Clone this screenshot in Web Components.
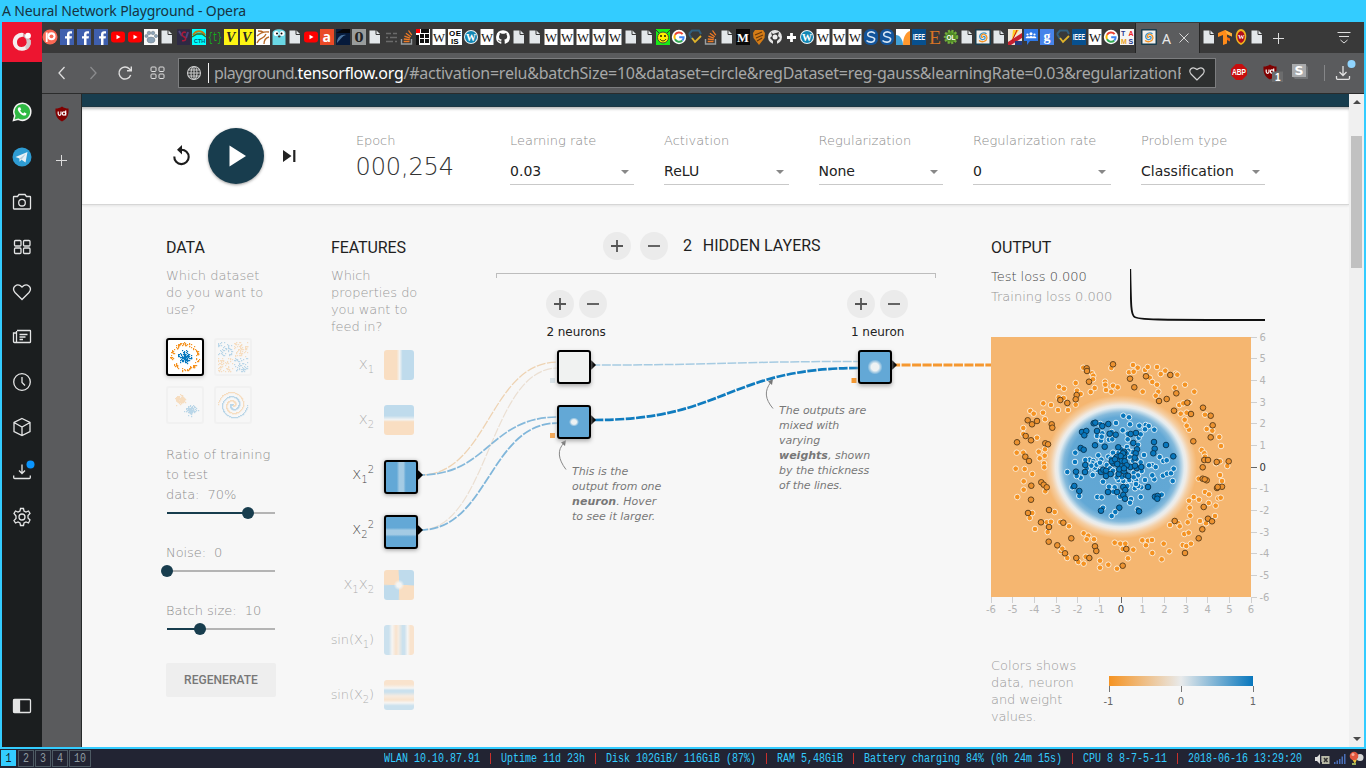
<!DOCTYPE html>
<html lang="en">
<head>
<meta charset="utf-8">
<title>A Neural Network Playground - Opera</title>
<style>
html,body{margin:0;height:100%;overflow:hidden;background:#33ccff}
</style>
</head>
<body>
<desktop-screen></desktop-screen>
<script>
const define = (name, html, setup) => customElements.define(name, class extends HTMLElement {
  connectedCallback() {
    if (this.shadowRoot) return;
    const root = this.attachShadow({ mode: 'open' });
    root.innerHTML = typeof html === 'function' ? html(this) : html;
    if (setup) setup(this, root);
  }
});

/* Single line of text tracked so that it spans the width in the "w" attribute. */
define('fit-text', '<style>:host{display:block;white-space:pre;width:max-content}</style><span><slot></slot></span>', (el, root) => {
  queueMicrotask(() => {
    let w = +el.getAttribute('w');
    if (!w) return;
    if (w < 130) w -= .7;
    const span = root.querySelector('span');
    const n = el.textContent.length;
    el.style.letterSpacing = ((w - span.getBoundingClientRect().width) / n).toFixed(3) + 'px';
  });
});

const rng = seed => () => { seed = (seed * 1664525 + 1013904223) % 4294967296; return seed / 4294967296; };
const gaussian = r => Math.sqrt(-2 * Math.log(r() + 1e-9)) * Math.cos(6.2832 * r());

/* ---------- tab icons, 16 x 16 ---------- */
const spiral = '<rect width="16" height="16" rx="1" fill="#183d4e"/><rect x="1.500" y="1.500" width="13" height="13" fill="#f0f0ee"/><path d="M8 8c1-1.500 2.500 0 2 1.300C9 11.500 5 11 4.700 8 4.500 4.500 9 2.500 11.500 5" fill="none" stroke="#3b93c9" stroke-width="1.300"/><path d="M8 8C7 9 5.800 7.500 6.600 6.300 8 4 12 5.500 12 9c-.5 3.500-5 5-8 2.500" fill="none" stroke="#f59322" stroke-width="1.300"/>';
const fav = {
  doc: '<path d="M2.500 1.500h7L13 5v9.500H2.500z" fill="#e3e7ea"/><path d="M9 1v4.500h4.500" fill="none" stroke="#393939" stroke-width="1"/>',
  patreon: '<circle cx="8" cy="8" r="7.500" fill="#f96854"/><circle cx="9.500" cy="7.300" r="4" fill="#fff"/><circle cx="9.500" cy="7.300" r="1.900" fill="#f96854"/><path d="M3.800 3.500h1.800v9.500H3.800z" fill="#fff"/>',
  fb: '<rect x="1" y="0" width="14" height="16" fill="#3f5fae"/><path d="M13 4.500h-1.500c-.7 0-1 .3-1 1.100V7.200h2.500l-.4 2.400h-2.100V16H8V9.600H6V7.200h2V5.200C8 3.300 9.400 2.300 11 2.300h2z" fill="#fff"/>',
  yt: '<rect x="1" y="2.500" width="14" height="11" rx="3" fill="#f00"/><path d="M6.500 5.700v4.600l4-2.300z" fill="#fff"/>',
  paw: '<rect x="1" y="0" width="14" height="16" fill="#fafafa"/><g fill="#8ba3b8" stroke="#68747e" stroke-width=".5"><ellipse cx="8" cy="11" rx="4" ry="3"/><circle cx="3.500" cy="7" r="1.600"/><circle cx="6" cy="4" r="1.800"/><circle cx="10" cy="4" r="1.800"/><circle cx="13" cy="7" r="1.600"/></g>',
  purple: '<rect x="2" y="0" width="13" height="16" fill="#2e2944"/><path d="M4 2l3 5M13 3l-2 6" stroke="#51457c" stroke-width="2"/><path d="M11 3.500C7 2 6 6 8.500 7.500 12 9 11 12.500 7 11.500" fill="none" stroke="#a8193a" stroke-width="1.500"/>',
  cth: '<rect x="1" y="0" width="14" height="16" fill="#0ff"/><path d="M2 6c3-5 9-5 12 0" fill="none" stroke="#c57911" stroke-width="2"/><path d="M1 8l5-3h5l4 3" fill="none" stroke="#3b6b24" stroke-width="1.300"/><text x="3" y="13.800" font-size="5.500" font-family="Liberation Sans" font-weight="700" fill="#065b7a">CTH</text>',
  t: '<text x="1" y="12" font-size="12" font-family="Liberation Mono" textLength="14" lengthAdjust="spacingAndGlyphs" fill="#14b01b">{t}</text>',
  v: '<rect x="1" y="0" width="14" height="16" fill="#fdf514"/><text x="3" y="13" font-size="14" font-style="italic" font-weight="700" font-family="Liberation Serif" fill="#252525">V</text>',
  book: '<rect x="1" y="0" width="14" height="16" fill="#fff"/><path d="M3 2c3 0 4 0 5 1M2 7c3-3 6-5 12-4M2 14c4-8 6-2 9-9M9 15c0-4 1-6 5-7" stroke="#b96926" fill="none" stroke-width="1.300"/>',
  gopher: '<path d="M1.500 4c0-5 13-5 13 0v12h-13z" fill="#6ad7e5"/><circle cx="5.200" cy="4.500" r="2.500" fill="#fff"/><circle cx="11" cy="4.500" r="2.500" fill="#fff"/><circle cx="6" cy="4.500" r="1"/><circle cx="10.500" cy="4.500" r="1"/><ellipse cx="8.300" cy="7.500" rx="1.300" ry="1" fill="#433"/>',
  a: '<rect x="1" y="0" width="14" height="16" fill="#ea4a27"/><text x="3.500" y="12.500" font-size="14" font-weight="700" font-family="Open Sans" fill="#fff">a</text>',
  navy: '<rect x="1" y="0" width="14" height="16" fill="#061a3b"/><path d="M1 4h14V0H8z" fill="#06070b"/><path d="M2 14c0-6 4-9 9-8-4 1-5 4-9 8z" fill="#4b739d"/>',
  o: '<rect x="1" y="0" width="14" height="16" fill="#999c9c"/><text x="3.500" y="12.800" font-size="13" font-weight="700" font-family="DejaVu Serif" textLength="9" lengthAdjust="spacingAndGlyphs" fill="#222">0</text>',
  lines: '<path d="M3 4.500h5M10 4.500h4M3 8.500h2M7 8.500h7M3 12.500h7M12 12.500h2" stroke="#6b6b6b" stroke-width="1.500"/>',
  so: '<path d="M2.500 10v5h10V10" fill="none" stroke="#9ba0a3" stroke-width="1.400"/><path d="M4.700 12.500h5.800M4.800 10l6 .7M5.400 7.200l5.600 1.900M6.900 4.200l4.800 3.500M9.500 1.500l3.300 4.700" stroke="#ef7a25" stroke-width="1.300"/>',
  grid: '<rect x="1" y="0" width="14" height="16" fill="#fff"/><path d="M1 0h4v4H1z" fill="#f00"/><path d="M5 5h4v4H5zM10 5h4v4h-4zM5 10h4v4H5zM10 10h4v4h-4zM6 0h8v4H6zM1 6h3v10H1z" fill="#111"/>',
  w: '<rect x="1.500" y="0" width="13" height="16" fill="#fff"/><text x="2" y="12.500" font-size="12" font-family="Liberation Serif" textLength="12" lengthAdjust="spacingAndGlyphs" fill="#111">W</text>',
  oeis: '<rect x="1" y="0" width="14" height="16" fill="#fff"/><text x="2" y="7" font-size="8" font-weight="700" font-family="Liberation Sans" textLength="12">OE</text><text x="4" y="15" font-size="8" font-weight="700" font-family="Liberation Sans">IS</text>',
  wp: '<circle cx="8" cy="8" r="7" fill="#eaf4f9"/><circle cx="8" cy="8" r="6" fill="#1387b4"/><text x="3" y="12" font-size="11" font-weight="700" font-family="Liberation Serif" textLength="10" lengthAdjust="spacingAndGlyphs" fill="#fff">W</text>',
  gh: '<path d="M8 1.200a7 7 0 0 0-2.200 13.600c.4 0 .5-.2.500-.4V12.500c-2.500.3-3-1-3.300-1.800.8-.2 1.500 1 2 1.100.6.200 1.200 0 1.400-.2.100-.5.300-.7.500-.9C5 10.500 4 9.600 4 7.600c0-.8.300-1.300.7-1.800 0-.5-.1-1 .1-1.800.8 0 1.500.5 2 .8a7 7 0 0 1 2.600 0c.6-.4 1.200-.8 2-.8.200.8.200 1.300.1 1.800.5.500.7 1 .7 1.800 0 2-1.200 2.900-3 3.100.4.400.5.800.5 1.500v2.200c0 .2.100.4.500.4A7 7 0 0 0 8 1.200z" fill="#fff"/>',
  smiley: '<rect x="1" y="0" width="14" height="16" fill="#18ec17"/><circle cx="8" cy="8.500" r="5.500" fill="#fff000" stroke="#444"/><circle cx="6" cy="7" r=".9"/><circle cx="10" cy="7" r=".9"/><path d="M5 10c1.500 2.500 4.500 2.500 6 0" fill="none" stroke="#222"/><path d="M1 1l3 3M15 1l-3 3" stroke="#333"/>',
  g: '<circle cx="8" cy="8" r="7.200" fill="#fff"/><path d="M11.600 5.200A4.700 4.700 0 0 0 4 5.800" stroke="#ea4335" fill="none" stroke-width="2"/><path d="M4 5.800A4.700 4.700 0 0 0 4 10.300" stroke="#fbbc05" fill="none" stroke-width="2"/><path d="M4 10.300A4.700 4.700 0 0 0 11.300 11.500" stroke="#34a853" fill="none" stroke-width="2"/><path d="M11.300 11.500c1-1 1.400-2 1.300-3.200H8.200" stroke="#4285f4" fill="none" stroke-width="2"/>',
  hex: '<path d="M2 5l3-3.500h7L14 5M2 5l3 5" fill="none" stroke="#315f7e" stroke-width="2"/><path d="M5 9l3 4 6-6" fill="none" stroke="#e0b42b" stroke-width="1.800"/>',
  m: '<rect x="1" y="0" width="14" height="16" fill="#090909"/><text x="2" y="12.500" font-size="12.500" font-weight="700" font-family="Liberation Serif" fill="#fff">M</text>',
  shield: '<path d="M4 1h8l2 3-.5 5L8 16 2.500 9 2 4z" fill="#d57c16"/><path d="M4 6l7-3M5 9l7-3M6 12l5-3" stroke="#6c390a" stroke-width="1.200"/>',
  cat: '<circle cx="8" cy="8" r="7" fill="#e5e5e5"/><path d="M4 3l2 2 3-1 3-1-1 4 2 2-3 3v3H6v-3L3 9l2-2z" fill="#393939"/><circle cx="8" cy="8" r="2.500" fill="#eee"/>',
  plus: '<path d="M8.500 4v9M4 8.500h9" stroke="#fff" stroke-width="2.800"/>',
  s: '<rect x="1" y="0" width="14" height="16" rx="6" fill="#12549b"/><path d="M12 4.500C8 1 3.500 4 5 6.500c1.500 2 5 1 6.500 3C12.500 13 7 14.500 3.500 11.500" fill="none" stroke="#d5e5f5" stroke-width="1.600"/>',
  arc: '<rect x="1" y="0" width="14" height="16" fill="#fff"/><path d="M8 16c0-8 3-13 7-14v14z" fill="#ff982e"/><path d="M1 6c4 0 7 5 7 10H1z" fill="#42a0d5"/>',
  ieee: '<rect x="1" y="0" width="14" height="16" fill="#07508f"/><text x="2" y="11" font-size="8.500" font-weight="700" font-family="Liberation Sans" textLength="12" lengthAdjust="spacingAndGlyphs" fill="#fff">IEEE</text>',
  e: '<text x="2" y="14.500" font-size="19" font-family="Liberation Serif" textLength="12" lengthAdjust="spacingAndGlyphs" fill="#d77325">E</text>',
  ol: '<circle cx="8" cy="8" r="6" fill="#4f8a25" stroke="#72ad3c" stroke-width="2.500" stroke-dasharray="2 1.500"/><text x="3.500" y="10.500" font-size="6.500" font-weight="700" font-family="Liberation Sans" fill="#fff">OL</text>',
  spiral,
  flag: '<rect x="1" y="0" width="14" height="16" fill="#ece6da"/><path d="M1 13l14-9v5L4 16H1z" fill="#c42030"/><path d="M6 1h6L5 11z" fill="#ffcf27"/><path d="M10 1L5 12" stroke="#c11"/><path d="M8 12h7v4H8z" fill="#253a7d"/>',
  group: '<path d="M1 0h14v12H7l-3 4v-4H1z" fill="#2d77e5"/><g fill="#fff"><circle cx="8" cy="4.700" r="1.500"/><circle cx="4.500" cy="5.500" r="1.100"/><circle cx="11.500" cy="5.500" r="1.100"/><path d="M2.800 9.200V8.200c1-1 3-1 3.300-.5 1-.8 2.800-.8 3.800 0 .8-.5 2.300-.5 3.300.5v1z"/></g>',
  gb: '<rect x="1" y="0" width="14" height="16" fill="#4683ea"/><text x="4.500" y="11.500" font-size="14" font-weight="700" font-family="Liberation Serif" fill="#fff">g</text>',
  tams: '<rect x="1" y="0" width="14" height="16" fill="#f5f5f5"/><g font-family="Liberation Sans" font-weight="700" font-size="7"><text x="2" y="6.500" fill="#27348b">T</text><text x="9.500" y="6.500" fill="#e22">A</text><text x="2" y="14.500" fill="#eaa21c">M</text><text x="9.500" y="14.500" fill="#27348b">S</text></g>',
  tf: '<path d="M1 4l7-3 7 3.500v3L10 5.500v9L6 16V6L1 8z" fill="#ff8c1a"/><path d="M10 8l3 1.500v3L10 11z" fill="#f06a10"/><path d="M8 1l7 3.500v3L10 5z" fill="#ffb03b"/>',
  crest: '<path d="M8 0c7 1 7 13 0 16C1 13 1 1 8 0z" fill="#efb41d"/><path d="M8 2c5 1 5 10 0 12-5-2-5-11 0-12z" fill="#b20e1a"/><text x="5" y="10" font-size="6.500" font-weight="700" font-family="Liberation Serif" fill="#fff">W</text>'
};
define('fav-icon', el => `<style>:host{display:block;flex:none;width:16px;height:16px}svg{display:block}</style><svg width="16" height="16" viewBox="0 0 16 16">${fav[el.getAttribute('kind')]}</svg>`);

define('tab-strip', () => {
  const before = 'patreon fb fb fb yt yt paw doc purple cth t v v book gopher doc yt a navy o doc lines so grid w oeis wp w gh doc doc w w w w w doc doc smiley g hex so doc m shield cat plus wp w w w s s arc ieee e ol doc spiral doc flag group gb hex ieee w g tams'.split(' ');
  return `<style>
  :host{display:flex;height:31px;background:#393939;align-items:center}
  .a{display:flex;width:1093px;justify-content:flex-start;margin-top:-1px}
  fav-icon.g{margin-right:1px}
  .active{box-sizing:border-box;width:65px;height:30px;margin-top:1px;background:#5b5c5e;border:solid #262626;border-width:0 1px;display:flex;align-items:center;padding-left:5px;font:14px "Noto Sans",sans-serif;color:#e8e8e8}
  .active fav-icon{margin-top:-2px}
  .active span{margin-left:5px;width:12px}.active svg{margin-left:4px}
  .b{display:flex;padding-left:1px;margin-top:-1px}.plus{margin-left:5px}.menu{margin-left:auto;margin-right:12px}
  svg{display:block}
  </style><div class="a">${before.map((k, i) => `<fav-icon kind="${k}"${i < 5 ? ' class="g"' : ''}></fav-icon>`).join('')}</div>
  <div class="active"><fav-icon kind="spiral"></fav-icon><span>A</span><svg width="12" height="12" fill="none" stroke="#d8d8d8"><path d="M1.500 1.500l9 9m0-9l-9 9"/></svg></div>
  <div class="b">${['doc', 'tf', 'crest', 'doc'].map(k => `<fav-icon kind="${k}"></fav-icon>`).join('')}</div>
  <svg class="plus" width="16" height="16" stroke="#ddd"><path d="M8.500 3v11M3 8.500h11"/></svg>
  <svg class="menu" width="16" height="16" stroke="#ddd" fill="none"><path d="M1.500 2.500h13M3 6.500h10M4.500 10l3.500 3 3.500-3"/></svg>`;
});

const dl = '<path d="M8 1v9M4.500 7L8 10.500 11.500 7M1.500 11v2.300q0 1 1 1h11q1 0 1-1v-2.300"/>';
const tiles = '<rect x="2" y="2" width="5" height="4.500" rx="1"/><rect x="10" y="2" width="5" height="4.500" rx="1"/><rect x="2" y="9" width="5" height="4.500" rx="1"/><rect x="10" y="9" width="5" height="4.500" rx="1"/>';
const ublock = '<path d="M8 .5c2 1.400 4 2 6.500 2 .3 5.500-.5 10-6.500 13-6-3-6.800-7.500-6.500-13 2.500 0 4.500-.6 6.500-2z" fill="#800000"/><path d="M4.200 5.500v2.300q0 1.500 1.400 1.500t1.400-1.500V5.500M11.700 4.500v5" stroke="#fff" fill="none" stroke-width="1.200"/><circle cx="10" cy="7.500" r="1.700" fill="none" stroke="#fff" stroke-width="1.200"/>';

define('tool-bar', `<style>
  :host{display:flex;height:40px;background:#5a5b5d;border-bottom:1px solid #2b2c2c;align-items:center;box-sizing:content-box}
  svg{display:block;flex:none}
  .nav{display:flex;gap:16px;padding-left:11px;box-sizing:border-box;width:137px}
  .url{box-sizing:border-box;width:1038px;height:30px;background:#2d2f2f;border:1px solid #7c7d7f;display:flex;align-items:center;padding:0 9px 0 7px;margin-left:-1px;font:16px "Noto Sans",sans-serif;color:#a6a7a7}
  .caret{width:1px;height:20px;background:#f2f2f2;margin:0 5px 0 6px}
  .txt{display:flex;width:967px;overflow:hidden;line-height:26px}
  .txt b{font-weight:400;color:#fff}
  .ext{display:flex;align-items:center;margin-left:15px}
  </style>
  <div class="nav"><svg width="16" height="16" fill="none" stroke="#dedede" stroke-width="1.300"><path d="M11.500 2L6 8l5.500 6"/></svg>
  <svg width="16" height="16" fill="none" stroke="#8b8c8e" stroke-width="1.300"><path d="M5.500 2L11 8l-5.500 6"/></svg>
  <svg width="16" height="16" fill="none" stroke="#dedede" stroke-width="1.400"><path d="M13.700 10A6 6 0 1 1 12.500 4l1.500 1.500M14.300 1.500v4.200h-4.300"/></svg>
  <svg width="16" height="16" fill="none" stroke="#dedede">${tiles}</svg></div>
  <div class="url"><svg width="16" height="16" fill="none" stroke="#c9caca" stroke-width="1.100"><circle cx="8" cy="8" r="6.500"/><ellipse cx="8" cy="8" rx="3" ry="6.500"/><path d="M8 1.500v13M1.500 8h13M2.500 5h11M2.500 11h11"/></svg><div class="caret"></div>
  <div class="txt"><fit-text w="84.200">playground.</fit-text><b><fit-text w="106.700">tensorflow.org</fit-text></b><fit-text w="773.500">/#activation=relu&amp;batchSize=10&amp;dataset=circle&amp;regDataset=reg-gauss&amp;learningRate=0.03&amp;regularization</fit-text><span>R</span></div>
  <svg width="16" height="16" style="margin-left:8px" fill="none" stroke="#d2d2d2" stroke-width="1.200"><path d="M8 15L2 9C-1 5 3 .5 8 4.500 13 .5 17 5 14 9z"/></svg></div>
  <div class="ext"><svg width="16" height="16" style="margin-top:-2px"><path d="M5 0h6l5 5v6l-5 5H5l-5-5V5z" fill="#c70d0d"/><text x="1" y="11" font-size="8.500" font-weight="700" font-family="Liberation Sans" textLength="14" lengthAdjust="spacingAndGlyphs" fill="#fff">ABP</text></svg>
  <svg width="22" height="24" style="margin-left:15px" viewBox="0 -4 22 24"><g transform="translate(0 -1)">${ublock}</g><rect x="10" y="6.500" width="11" height="10.500" fill="#6b6c6d"/><text x="13" y="15.500" font-size="10" font-weight="700" font-family="Liberation Sans" fill="#fff">1</text></svg>
  <svg width="16" height="16" style="margin-left:8px;margin-top:-2px"><path d="M14 1l2 2v12H3l-2-2z" fill="#737577"/><rect width="14" height="13" fill="#a9abad"/><text x="2.500" y="11.200" font-size="12.500" font-weight="700" font-family="DejaVu Sans" textLength="9" lengthAdjust="spacingAndGlyphs" fill="#fff">S</text></svg>
  <div style="width:1px;height:16px;background:#858688;margin-left:16px"></div>
  <svg width="24" height="26" style="margin-left:10px" viewBox="0 -5 24 26" fill="none" stroke="#e2e2e2" stroke-width="1.300">${dl}<circle cx="16.500" cy="-1" r="4" fill="#90d5ff" stroke="none"/></svg></div>`);

define('side-bar', () => {
  const items = [
    '<path d="M1.500 18.500l1.300-4.700a8.500 8.500 0 1 1 3.300 3.400z" fill="#2fb943" stroke="#f3f3f3" stroke-width="1.500"/><path d="M6.500 5.500c-1.500 1.500-.5 3.500 1.500 5.700 2.200 2.200 4.500 3.200 6 1.700l.5-1.300-2.200-1.300-1.100 1.200c-1-.3-2.800-2-3-3l1-1.100-1-2.200z" fill="#fff"/>',
    '<circle cx="10" cy="10" r="9.500" fill="#2e9cd3"/><path d="M3.500 10L15.500 5l-2 10.500-4-2.800-2 2v-3.200z" fill="#e9f2f7"/><path d="M7.500 11.500L14 6.500l-4.500 6.200z" fill="#b7cedb"/>',
    '<path d="M2 4.500h3.500L7 2.500h6l1.500 2H18q.5 0 .5.500v11.500q0 .5-.5.500H2q-.5 0-.5-.5V5Q1.500 4.500 2 4.500z"/><circle cx="10" cy="10.700" r="3.300"/>',
    '<rect x="2.500" y="3.500" width="6.500" height="5.500" rx="1"/><rect x="11.500" y="3.500" width="6.500" height="5.500" rx="1"/><rect x="2.500" y="11" width="6.500" height="5.500" rx="1"/><rect x="11.500" y="11" width="6.500" height="5.500" rx="1"/>',
    '<path d="M10 17.500L3 10.500C-1 5.500 5 0 10 5c5-5 11 .5 7 5.500z"/>',
    '<path d="M5 3.500h13q.5 0 .5.500v11q0 .5-.5.500H2.500q-1 0-1-1V6H4M4.500 4v11.500M7.500 7.500h8M7.500 10h6M7.500 12.500h3.500"/>',
    '<circle cx="10" cy="10" r="8.300"/><path d="M10 5v5.500l3 3"/>',
    '<path d="M10 1.500l8 4v9l-8 4-8-4v-9zM2 5.500l8 4.500 8-4.500M10 10v8.500"/>',
    '<path d="M10 2.500v8.500M7 8.500l3 3 3-3M1.700 13.500v2q0 1 1 1h14.600q1 0 1-1v-2"/><circle cx="18.500" cy="2.500" r="4" fill="#0a95fd" stroke="none"/>',
    '<path d="M8.500 1.500h3l.5 2.500 2 1 2.500-1 1.500 2.500-2 2v2.500l2 2L16.500 16 14 15l-2 1-.5 2.500h-3L8 16l-2-1-2.500 1L2 13.500l2-2V9L2 6.500 3.500 4 6 5l2-1z" transform="translate(0 1)"/><circle cx="10" cy="11" r="3"/>'
  ];
  const wrap = s => `<div><svg width="20" height="20">${s}</svg></div>`;
  return `<style>:host{display:flex;flex-direction:column;width:40px;background:#1b1e1f}
  svg{display:block;fill:none;stroke:#e4e5e5;stroke-width:1.300;overflow:visible}
  div{height:44.900px;display:flex;align-items:center;justify-content:center;flex:none;margin-left:-1px}
  .logo{height:40px;background:#ed1530;margin:0 0 28px 0}.last{margin-top:auto;height:40px;margin-bottom:21px}
  svg path[fill="#fff"],svg path[fill="#e9f2f7"],svg path[fill="#b7cedb"],circle[fill="#2e9cd3"]{stroke:none}</style>
  <div class="logo"><svg width="22" height="22" style="stroke:none"><path d="M12.500 2A9 9 0 1 0 19.600 9l-3.800.3a5.300 5.300 0 0 1-5.300 6.800A4.800 4.800 0 0 1 6 11.300C6 8 8.500 5.800 12.500 5.800z" fill="#f6eeee"/><path d="M12.500 2v3.800L14.500 7.500c1.500 2.500 1.800 6-.3 8.500l1 3c4-2 5.300-6 4.400-10z" fill="#cdc4c6" opacity=".9"/><circle cx="17" cy="4.700" r="2.900" fill="#fff"/></svg></div>
  ${items.map(wrap).join('')}
  <div class="last"><svg width="20" height="20"><rect x="1.500" y="3.500" width="17" height="13" rx="1"/><path d="M2 4h5.500v12H2z" fill="#e4e5e5"/></svg></div>`;
});

define('ext-panel', `<style>:host{display:flex;flex-direction:column;align-items:center;width:39px;background:#5a5b5d;border-right:1px solid #26292a;padding-top:12px}svg{display:block}</style>
<svg width="16" height="16">${ublock}</svg><svg width="16" height="16" stroke="#dcdcdc" style="margin-top:30px"><path d="M7.500 3v11M2 8.500h11"/></svg>`);

/* ---------- playground header ---------- */
define('drop-field', `<style>:host{display:block;box-sizing:border-box}
::slotted([slot=label]){color:#8b8b8b;font:200 13px/18px "DejaVu Sans",sans-serif}
.v{margin-top:8px;height:26px;border-bottom:1px solid #c9c9c9;display:flex;justify-content:space-between;align-items:center;padding-right:5px;color:#222;font:14px "DejaVu Sans",sans-serif}
i{border:4px solid transparent;border-top-color:#888;border-bottom:0;margin-top:2px}</style>
<slot name="label"></slot><div class="v"><slot></slot><i></i></div>`);

define('top-controls', `<style>:host{display:flex;height:97px;background:#fff;border-bottom:1px solid #d6d6d6;box-shadow:inset 0 3px 3px -1px #bbb,0 1px 2px #e4e4e4;padding-left:89px;box-sizing:content-box}
svg{display:block}
.play{display:flex;align-items:center;gap:17px;width:185px}
.btn{width:56px;height:56px;border-radius:50%;background:#183d4e;box-shadow:0 1px 3px #999;display:flex;align-items:center;justify-content:center}
.epoch{padding-top:25px;width:154px;color:#8b8b8b;font:200 13px/18px "DejaVu Sans",sans-serif}
.num{font-size:24px;line-height:34px;color:#333;margin-left:-.5px}
drop-field{margin-top:25px}
</style><div class="play">
<svg width="20" height="24" fill="none" stroke="#1c1c1c" stroke-width="2.100"><path d="M3.300 12.500a7.200 7.200 0 1 0 7-6.800"/><path d="M11 1v9.400L6 5.700z" fill="#1c1c1c" stroke="none"/></svg>
<div class="btn"><svg width="20" height="24"><path d="M3.500 1.500v21l16.500-10.500z" fill="#fff"/></svg></div>
<svg width="14" height="14" fill="#222" style="margin-left:1px"><path d="M1 1v12l8.500-6zM11.200 1h2.200v12h-2.200z"/></svg></div>
<div class="epoch"><fit-text w="40">Epoch</fit-text><fit-text class="num" w="99">000,254</fit-text></div>
<drop-field style="width:124px;margin-right:30px"><fit-text slot="label" w="87">Learning rate</fit-text><fit-text w="32">0.03</fit-text></drop-field>
<drop-field style="width:124.500px;margin-right:30px"><fit-text slot="label" w="66">Activation</fit-text><fit-text w="36">ReLU</fit-text></drop-field>
<drop-field style="width:124.500px;margin-right:30px"><fit-text slot="label" w="93.500">Regularization</fit-text><fit-text w="37">None</fit-text></drop-field>
<drop-field style="width:138px;margin-right:30px"><fit-text slot="label" w="124">Regularization rate</fit-text><fit-text w="9">0</fit-text></drop-field>
<drop-field style="width:124px"><fit-text slot="label" w="87">Problem type</fit-text><fit-text w="93.500">Classification</fit-text></drop-field>`);

/* ---------- data column ---------- */
const O = '#f59322', B = '#0877bd';
const thumbDots = kind => {
  const r = rng(kind.length * 77 + 5); const out = [];
  const dot = (x, y, c) => out.push(`<rect x="${Math.round(x)}" y="${Math.round(y)}" width="1.200" height="1.200" fill="${c}"/>`);
  if (kind === 'circle') for (let i = 0; i < 230; i++) {
    const outer = i % 2, a = r() * 6.283, d = outer ? 11 + r() * 3.500 : r() * 7;
    dot(16.500 + d * Math.cos(a), 16.500 + d * Math.sin(a), outer ? O : B);
  }
  if (kind === 'xor') for (let i = 0; i < 260; i++) {
    const x = 1.500 + r() * 30, y = 1.500 + r() * 30;
    if (Math.abs(x - 17) > 1 && Math.abs(y - 17) > 1) dot(x, y, (x < 17) === (y < 17) ? B : O);
  }
  if (kind === 'gauss') for (let i = 0; i < 220; i++) {
    const s = i % 2; dot((s ? 11.500 : 22.500) + gaussian(r) * 2.500, (s ? 11 : 22) + gaussian(r) * 2.200, s ? O : B);
  }
  if (kind === 'spiral') for (let i = 0; i < 150; i++) {
    const t = i / 150 * 11, d = i / 150 * 14.500;
    dot(16.500 + d * Math.sin(t), 16.500 + d * Math.cos(t), O);
    dot(16.500 - d * Math.sin(t), 16.500 - d * Math.cos(t), B);
  }
  return out.join('');
};
define('data-thumb', el => `<style>:host{display:block;box-sizing:border-box;width:38px;height:38px;border:2px solid #e2e2e2;border-radius:3px;opacity:.25}
:host([on]){border-color:#000;background:#fff;opacity:1;box-shadow:0 1px 4px #bbb}svg{display:block}</style><svg width="34" height="34">${thumbDots(el.getAttribute('kind'))}</svg>`);

define('range-slider', el => `<style>:host{display:block;height:18px;width:108px;margin:-1px 0 0 1px}svg{display:block;overflow:visible}</style>
<svg width="108" height="18"><path d="M0 9h108" stroke="#b4b4b4" stroke-width="2"/><path d="M0 9h${el.getAttribute('at')}" stroke="#183d4e" stroke-width="2"/><circle cx="${el.getAttribute('at')}" cy="9" r="6" fill="#183d4e"/></svg>`);

const colStyle = `h2{margin:0;font:400 16px/20px Roboto,sans-serif;color:#1f1f1f}
.q{font:200 13px/17px "DejaVu Sans",sans-serif;color:#999}svg{display:block}`;
define('data-column', `<style>:host{display:block;width:110px;padding-top:33px}${colStyle}
.q{margin-top:9px}.thumbs{display:grid;grid-template-columns:38px 38px;gap:10px;margin:20px 0 21px}
.l{font:200 13px/20px "DejaVu Sans",sans-serif;color:#8e8e8e}
button{display:block;width:110px;height:34px;margin:24.500px 0 0;padding:0;border:0;border-radius:2px;background:#eee;color:#777;font:500 12px Roboto,sans-serif}
button fit-text{margin:0 auto}
</style><h2><fit-text w="39.500">DATA</fit-text></h2>
<div class="q"><fit-text w="94">Which dataset</fit-text><fit-text w="98">do you want to</fit-text><fit-text w="30">use?</fit-text></div>
<div class="thumbs"><data-thumb kind="circle" on></data-thumb><data-thumb kind="xor"></data-thumb><data-thumb kind="gauss"></data-thumb><data-thumb kind="spiral"></data-thumb></div>
<div class="l"><fit-text w="105">Ratio of training</fit-text><fit-text w="42.500">to test</fit-text><fit-text w="71">data:  70%</fit-text></div><range-slider at="81"></range-slider>
<div class="l" style="margin-top:21px"><fit-text w="57">Noise:  0</fit-text></div><range-slider at="0"></range-slider>
<div class="l" style="margin-top:21px"><fit-text w="96">Batch size:  10</fit-text></div><range-slider at="33"></range-slider>
<button><fit-text w="74.500">REGENERATE</fit-text></button>`);

/* ---------- features ---------- */
define('feature-row', `<style>:host{display:flex;height:55px;align-items:flex-start;justify-content:flex-end;width:88px;opacity:.42}
:host([on]){opacity:1}
.t{font:200 13px/30px "DejaVu Sans",sans-serif;color:#444;margin-right:10px;white-space:nowrap}
.box{width:30px;height:30px;border-radius:3px;margin-right:5px;background:var(--fill);box-sizing:border-box;flex:none}
:host([on]) .box{width:34px;height:34px;border:2px solid #000;margin-right:1px;box-shadow:0 1px 4px #999}
</style><div class="t"><slot></slot></div><div class="box"></div>`);
define('feature-column', `<style>:host{display:block;width:89px;padding-top:33px}${colStyle}
.q{margin-top:9px;margin-bottom:15px}sub,sup{font-size:10px;line-height:0}sub{vertical-align:-4px}sup{vertical-align:6px}
</style><h2><fit-text w="75.700">FEATURES</fit-text></h2>
<div class="q"><fit-text w="40">Which</fit-text><fit-text w="87">properties do</fit-text><fit-text w="77">you want to</fit-text><fit-text w="52">feed in?</fit-text></div>
<feature-row style="--fill:linear-gradient(90deg,#fcbd7b 42%,#eef0ee 52%,#74b6de 62%)">X<sub>1</sub></feature-row>
<feature-row style="--fill:linear-gradient(#74b6de 36%,#eef0ee 49%,#fcbd7b 56%)">X<sub>2</sub></feature-row>
<feature-row on style="--fill:linear-gradient(90deg,#63a8d6 36%,#a4cbe4 44%,#a4cbe4 58%,#63a8d6 66%)">X<sub>1</sub><sup>2</sup></feature-row>
<feature-row on style="--fill:linear-gradient(#63a8d6 36%,#a4cbe4 44%,#a4cbe4 58%,#63a8d6 66%)">X<sub>2</sub><sup>2</sup></feature-row>
<feature-row style="--fill:radial-gradient(circle,#eef0ee 10%,transparent 25%),conic-gradient(#74b6de 25%,#fcbd7b 26%,#fcbd7b 49%,#74b6de 51%,#74b6de 74%,#fcbd7b 76%,#fcbd7b 99%,#74b6de)">X<sub>1</sub>X<sub>2</sub></feature-row>
<feature-row style="--fill:linear-gradient(90deg,#8fc3e2 16%,#f4f3ef 27%,#fcc894 40%,#f4ddc4 48%,#8fc3e2 62%,#8fc3e2 68%,#f4f3ef 79%,#fcc894 88%)"><fit-text w="44">sin(X<sub>1</sub>)</fit-text></feature-row>
<feature-row style="--fill:linear-gradient(#fcc894 14%,#f4f3ef 27%,#8fc3e2 34%,#8fc3e2 40%,#f4ddc4 53%,#fcc894 66%,#f4f3ef 76%,#8fc3e2 86%)"><fit-text w="44">sin(X<sub>2</sub>)</fit-text></feature-row>`);

/* ---------- network ---------- */
define('round-button', el => `<style>:host{display:block;width:28px;height:28px;border-radius:50%;background:#ebebeb}svg{display:block}</style><svg width="28" height="28" stroke="#555" stroke-width="1.800"><path d="M8 14h12${el.hasAttribute('plus') ? 'M14 8v12' : ''}"/></svg>`);
/* The network is a free canvas; its origin is the top-left of this element (420,205 on screen). */
define('network-graph', () => {
  const X = 420, Y = 205;
  const link = (x1, y1, x2, y2, c, w, off) => { const m = (x1 + x2) / 2; return `<path d="M${x1} ${y1}C${m} ${y1} ${m} ${y2} ${x2} ${y2}" stroke="${c}" stroke-width="${w}" stroke-dasharray="9 1.500" stroke-dashoffset="${off}" fill="none"/>`; };
  const knob = (x, y) => `<path d="M${x - 1} ${y - 4.500}h1.500l4.500 4.500-4.500 4.500h-1.500z" fill="#000"/>`;
  return `<style>:host{display:block;position:relative;width:571px;height:542px}
  svg{position:absolute;left:0;top:0;overflow:visible}
  .head{display:flex;padding:27px 0 0 183px;align-items:center;font:400 16px/20px Roboto,sans-serif;color:#1f1f1f}
  .bracket{height:4px;width:438px;margin:13px 0 0 76px;border:1px solid #bdbdbd;border-bottom:0}
  .p{position:absolute;color:#222;font:12px/16px "DejaVu Sans",sans-serif}
  .pair{display:flex;gap:5px}
  .node{position:absolute;box-sizing:border-box;width:34px;height:34px;border:2px solid #000;border-radius:3px;box-shadow:0 2px 4px #aaa}
  .call{font:italic 11px/15px "DejaVu Sans",sans-serif;color:#777}
  </style>
  <div class="head"><round-button plus></round-button><round-button style="margin-left:9px"></round-button><fit-text w="10" style="margin-left:15px">2</fit-text><fit-text w="118.500" style="margin-left:10.500px">HIDDEN LAYERS</fit-text></div>
  <div class="bracket"></div>
  <svg width="571" height="542"><g transform="translate(${-X} ${-Y})">
  ${link(420, 475, 558, 362, '#eed3b3', 1.300, 2)}${link(420, 530, 558, 368, '#ebdfd2', 1.200, 0)}
  ${link(420, 475, 558, 417, '#86b9db', 1.700, 4)}${link(420, 530, 558, 423, '#80b6da', 1.800, 1)}
  ${link(594, 365, 859, 361.500, '#a6cbe2', 1.500, 3)}${link(594, 420, 859, 368, '#107cbf', 2.700, 0)}
  ${link(894, 365, 991, 365, '#f59830', 3.200, 3)}
  ${knob(418, 475)}${knob(418, 530)}${knob(591, 365)}${knob(591, 420)}${knob(892, 365)}
  <path d="M550 378h5v5h-5z" fill="#dae3e8"/><path d="M550 433h5v5h-5z" fill="#f3a95a"/><path d="M851.500 378h5v5h-5z" fill="#f59830"/>
  <g fill="none" stroke="#888"><path d="M566 469.500C558 459 557 450 564 443"/><path d="M773 408.500C765 399 764 391 771 382"/></g>
  <g fill="#777"><path d="M566 440l-1 6-4-3.500z"/><path d="M773 379l-1 6-4-3.500z"/></g>
  </g></svg>
  <div class="p pair" style="left:126px;top:85px"><round-button plus></round-button><round-button></round-button></div>
  <div class="p pair" style="left:427px;top:85px"><round-button plus></round-button><round-button></round-button></div>
  <div class="p" style="left:126.500px;top:119px"><fit-text w="60">2 neurons</fit-text></div>
  <div class="p" style="left:431px;top:119px"><fit-text w="54">1 neuron</fit-text></div>
  <div class="node" style="left:137px;top:145px;background:#f0f2f1"></div>
  <div class="node" style="left:137px;top:200px;background:radial-gradient(ellipse 5px 4.500px at 50% 50%,#eef2f3 50%,#63a8d6 100%)"></div>
  <div class="node" style="left:438px;top:145px;background:radial-gradient(circle 7.500px at 50% 50%,#eef2f3 50%,#63a8d6 100%)"></div>
  <div class="p call" style="left:152px;top:259px"><fit-text w="57">This is the</fit-text><fit-text w="90">output from one</fit-text><fit-text w="85"><b>neuron</b>. Hover</fit-text><fit-text w="84">to see it larger.</fit-text></div>
  <div class="p call" style="left:359px;top:198px"><fit-text w="88">The outputs are</fit-text><fit-text w="61">mixed with</fit-text><fit-text w="42">varying</fit-text><fit-text w="92"><b>weights</b>, shown</fit-text><fit-text w="91">by the thickness</fit-text><fit-text w="64">of the lines.</fit-text></div>`;
});

/* ---------- output ---------- */
/* Sample positions in thirds of a pixel; the heatmap's top-left is (33,-189). */
const S = {
  testO: '399,-107 320,-95 321,-87 327,-55 450,-64 463,-38 498,-71 571,-75 589,-20 560,-3 537,3 622,8 582,32 633,42 669,23 692,47 290,-15 287,-2 241,0 262,9 143,61 156,73 171,63 215,73 217,83 137,108 153,121 111,127 196,130 204,133 136,170 147,183 154,257 184,247 191,254 200,262 153,299 207,330 144,339 183,367 250,368 207,381 206,425 232,436 274,415 255,460 289,474 328,474 345,439 349,453 428,497 439,447 698,76 692,112 640,124 673,180 684,180 710,186 746,184 668,202 668,236 680,241 674,238 726,260 711,264 713,261 671,321 684,356 696,364 584,363 667,388 656,415 615,459',
  trainO: '310,-97 394,-96 336,-80 340,-73 339,-62 344,-36 332,-24 287,-51 291,-28 302,-18 237,-40 252,-34 236,-8 251,-6 287,14 264,30 234,30 213,15 190,10 151,33 161,41 189,38 375,-55 376,-46 399,-43 378,-30 394,-25 413,-38 459,-105 473,-97 447,-83 461,-85 495,-90 503,-99 531,-99 556,-88 542,-78 587,-79 592,-76 509,-67 517,-54 531,-46 488,-25 535,-25 527,-13 584,-37 615,-46 643,-25 598,15 610,10 628,7 602,41 620,38 675,44 130,84 130,102 171,113 195,58 110,158 130,158 176,155 179,175 194,167 192,190 193,202 195,148 107,206 134,207 157,222 131,244 131,269 112,291 196,274 224,336 149,354 157,339 165,387 200,367 213,365 203,396 267,379 241,366 242,453 247,446 262,474 311,400 325,407 320,418 342,418 317,470 295,486 311,491 360,482 360,503 385,494 411,506 404,428 421,431 436,431 428,447 460,449 444,475 487,421 504,422 516,420 498,436 517,459 551,431 568,454 545,478 570,375 595,370 599,379 613,402 626,398 608,435 619,438 633,431 660,363 678,370 705,348 631,347 623,367 629,323 627,302 641,291 657,299 675,276 687,283 686,309 707,317 715,295 722,293 726,243 720,225 742,198 720,184 708,190 665,150 673,160 675,170 723,138 718,111 680,87 697,92 627,89 620,77 614,59 656,236',
  testB: '341,70 346,68 367,78 385,72 351,93 306,96 319,93 313,106 389,101 407,104 345,136 374,140 302,144 311,149 316,195 315,216 288,215 363,216 370,209 378,228 392,222 283,258 298,273 384,276 411,276 430,261 436,270 430,285 435,296 363,332 418,323 477,334 504,261 525,290 533,288 532,296 580,169 558,135 522,126 524,146 520,160 452,102 468,99 460,129 471,148 467,160 464,173 415,142 432,155 451,201 470,205 484,201 437,224 416,222 422,198 400,190 432,170 425,182 411,170 395,184 434,184 445,228 405,178 418,208 432,214 440,196 429,160 378,212 412,192 465,197 432,205 422,168',
  trainB: '430,47 447,52 361,72 408,69 450,73 428,91 443,101 351,108 367,100 387,119 363,122 365,110 395,96 478,77 497,75 506,78 495,88 523,89 476,113 482,103 286,158 285,186 355,166 399,158 329,179 343,190 364,179 385,170 316,180 262,216 302,233 290,228 343,208 338,225 369,245 387,260 352,291 365,292 298,288 277,262 369,323 406,336 395,348 473,328 482,291 453,297 450,308 465,265 484,262 475,258 457,240 468,241 495,240 523,238 517,226 549,227 561,221 573,220 581,206 578,243 516,195 527,201 539,171 550,183 560,181 492,165 441,141 474,134 545,284 340,183 338,190 352,210 345,203 334,197 350,194 360,188 320,205 404,262 415,240 430,243 442,258 400,275 420,290 461,219 474,226 485,213 459,182 470,178 482,187 449,170 457,156 445,152 380,195 390,205 399,212 386,220 410,232 426,232 448,240 468,252 405,172 392,176 416,158 424,148 440,160 461,232 507,196 443,118 397,118'
};
define('output-heatmap', () => {
  const circ = (list, fill, stroke) => list.split(' ').map(p => { const [x, y] = p.split(',').map(Number); return `<circle cx="${((x - 33) / 3).toFixed(1)}" cy="${((y + 189) / 3).toFixed(1)}" r="2.800" fill="${fill}" stroke="${stroke}"/>`; }).join('');
  let axes = '';
  for (let i = -6; i <= 6; i++) {
    const p = 130 + i * 260 / 12, q = Math.floor(p) + .5, c = i ? '#cfcfcf' : '#666', f = i ? '#b4b4b4' : '#333';
    axes += `<path d="M${q} 260v6M260 ${q}h6" stroke="${c}"/><text x="${p}" y="276" text-anchor="middle" fill="${f}">${i}</text><text x="268.500" y="${p + 3.500}" fill="${f}">${-i}</text>`;
  }
  return `<style>:host{display:block;width:290px;height:282px}svg{display:block;overflow:visible;font:10px "DejaVu Sans",sans-serif}</style>
  <svg width="290" height="282"><defs><radialGradient id="h" gradientUnits="userSpaceOnUse" cx="0" cy="0" r="80"><stop offset="0" stop-color="#5fa5d3"/><stop offset=".66" stop-color="#62a8d5"/><stop offset=".72" stop-color="#83b9db"/><stop offset=".79" stop-color="#e3ecf0"/><stop offset=".82" stop-color="#f0ebe5"/><stop offset=".88" stop-color="#f5cda0"/><stop offset=".95" stop-color="#f5b670"/></radialGradient></defs>
  <rect width="260" height="260" fill="#f5b670"/><g transform="translate(130 130) scale(1 .945)"><circle r="79" fill="url(#h)"/></g>
  ${circ(S.trainO, O, '#fbe9d2')}${circ(S.trainB, B, '#d9ecf7')}${circ(S.testO, '#ec9230', '#65441d')}${circ(S.testB, B, '#083a5b')}${axes}</svg>`;
});

define('output-column', `<style>:host{display:block;width:290px;padding-top:33px}${colStyle}
.top{display:flex;height:58px;margin-top:9px}.loss{width:139px;font:200 13px/20px "DejaVu Sans",sans-serif;color:#444}
.top svg{margin-top:2px}
.legend{display:flex;margin-top:38px}.legend .q{margin:0;width:115px}.legend svg{margin-top:19px;overflow:visible}
output-heatmap{margin-top:12px}</style>
<h2><fit-text w="61">OUTPUT</fit-text></h2>
<div class="top"><div class="loss"><fit-text w="96.500">Test loss 0.000</fit-text><fit-text w="122" style="color:#949494">Training loss 0.000</fit-text></div>
<svg width="136" height="54"><path d="M.2 0C1 38 1 44 4 47.500 7 51 22 51 135 51" fill="none" stroke="#111" stroke-width="1.900"/></svg></div>
<output-heatmap></output-heatmap>
<div class="legend"><div class="q"><fit-text w="86">Colors shows</fit-text><fit-text w="83.500">data, neuron</fit-text><fit-text w="72">and weight</fit-text><fit-text w="46">values.</fit-text></div>
<svg width="160" height="36"><defs><linearGradient id="l"><stop stop-color="#f59322"/><stop offset=".5" stop-color="#e8eaeb"/><stop offset="1" stop-color="#0877bd"/></linearGradient></defs><rect x="3" width="144" height="10" fill="url(#l)"/><path d="M3.500 10v6M75.500 10v6M147.500 10v6" stroke="#777"/><g font-family="DejaVu Sans" font-size="10" fill="#666" text-anchor="middle"><text x="2.500" y="29">-1</text><text x="75" y="29">0</text><text x="147" y="29">1</text></g></svg></div>`);

define('web-page', `<style>:host{display:block;flex:1;min-width:0;overflow:hidden;background:#f7f7f7}
.band{height:12px;background:#183d4e;border-bottom:1px solid #0f2a37}
.main{display:flex;padding-left:84px}.main>*{flex:none}feature-column{margin-left:55px}</style>
<div class="band"></div><top-controls></top-controls><div class="main"><data-column></data-column><feature-column></feature-column><network-graph></network-graph><output-column></output-column></div>`);

define('scroll-bar', `<style>:host{display:flex;flex-direction:column;width:15px;background:#f0f0f0;align-items:center}
i{border:4px solid transparent}.u{border-bottom-color:#4a4a4a;border-top:0;margin-top:6px}.d{border-top-color:#4a4a4a;border-bottom:0;margin-top:auto;margin-bottom:6px}
.t{width:11px;height:132px;background:#c1c1c1;margin-top:32px}</style><i class="u"></i><div class="t"></div><i class="d"></i>`);

define('status-bar', () => {
  const items = ['WLAN 10.10.87.91', 'Uptime 11d 23h', 'Disk 102GiB/ 116GiB (87%)', 'RAM 5,48GiB', 'Battery charging 84% (0h 24m 15s)', 'CPU 8 8-7-5-11', '2018-06-16 13:29:20'];
  return `<style>:host{display:flex;height:19px;background:#222433;align-items:center;font:10px/19px "Liberation Mono",monospace;color:#33ccff}
  .ws{display:flex;gap:1px;padding-left:1px}.ws div{box-sizing:border-box;width:16px;height:17px;line-height:15px;text-align:center;border:1px solid #4d5a63;color:#8f9ba0}
  .ws span,.info fit-text{display:block;transform:scaleY(1.250)}
  .ws .on{background:#33ccff;color:#10202c;border-color:#33ccff;width:15px;margin-right:1px;height:16px}.ws .w{width:22px}
  .info{display:flex;margin-left:auto;align-items:center}.info i{width:1px;height:11px;background:#c9302c;margin:0 10px}
  svg{display:block}.tray{display:flex;margin-left:12px;width:52px;gap:1px}</style>
  <div class="ws"><div class="on"><span>1</span></div><div><span>2</span></div><div><span>3</span></div><div><span>4</span></div><div class="w"><span>10</span></div></div>
  <div class="info">${items.map(t => `<fit-text w="${t.length * 6 + (t.length * 6 < 130 ? .7 : 0)}">${t}</fit-text>`).join('<i></i>')}</div>
  <div class="tray"><svg width="16" height="16"><path d="M1 6h2l3-3v10L3 10H1z" fill="#ddd"/><path d="M7.500 5v6" stroke="#888"/><rect x="8" y="5" width="7.500" height="8" fill="#b9baa8"/><path d="M10 7l3.500 4m0-4l-3.500 4" stroke="#333" stroke-width="1.500"/></svg>
  <svg width="16" height="16"><path d="M3 11h1.500v2H3zM5.500 9.500H7V13H5.500zM8 8h1.500v5H8zM10.500 5.500H12V13h-1.500zM13 3h1.500v10H13z" fill="#4a6fb8"/></svg>
  <svg width="16" height="16"><circle cx="12" cy="6.500" r="3.500" fill="#d6d8d8"/><path d="M4 8l3 5 2-5z" fill="#e7c23a"/><circle cx="6" cy="5" r="4.300" fill="#e2563d"/><circle cx="5" cy="3.500" r="1.500" fill="#f6ae9b"/><path d="M4 12h4v2H4z" fill="#9bb05e"/></svg></div>`;
});

define('desktop-screen', `<style>:host{display:flex;flex-direction:column;width:1366px;height:768px;background:#33ccff;overflow:hidden}
.title{height:22px;padding-left:2px;font:14px/21px "Noto Sans",sans-serif;color:#173342}
.win{display:flex;height:725px;margin:0 2px 2px}.body{flex:1;display:flex;flex-direction:column;min-width:0}.row{display:flex;flex:1;min-height:0}</style>
<div class="title"><fit-text w="244">A Neural Network Playground - Opera</fit-text></div>
<div class="win"><side-bar></side-bar><div class="body"><tab-strip></tab-strip><tool-bar></tool-bar><div class="row"><ext-panel></ext-panel><web-page></web-page><scroll-bar></scroll-bar></div></div></div>
<status-bar></status-bar>`);
</script>
</body>
</html>
